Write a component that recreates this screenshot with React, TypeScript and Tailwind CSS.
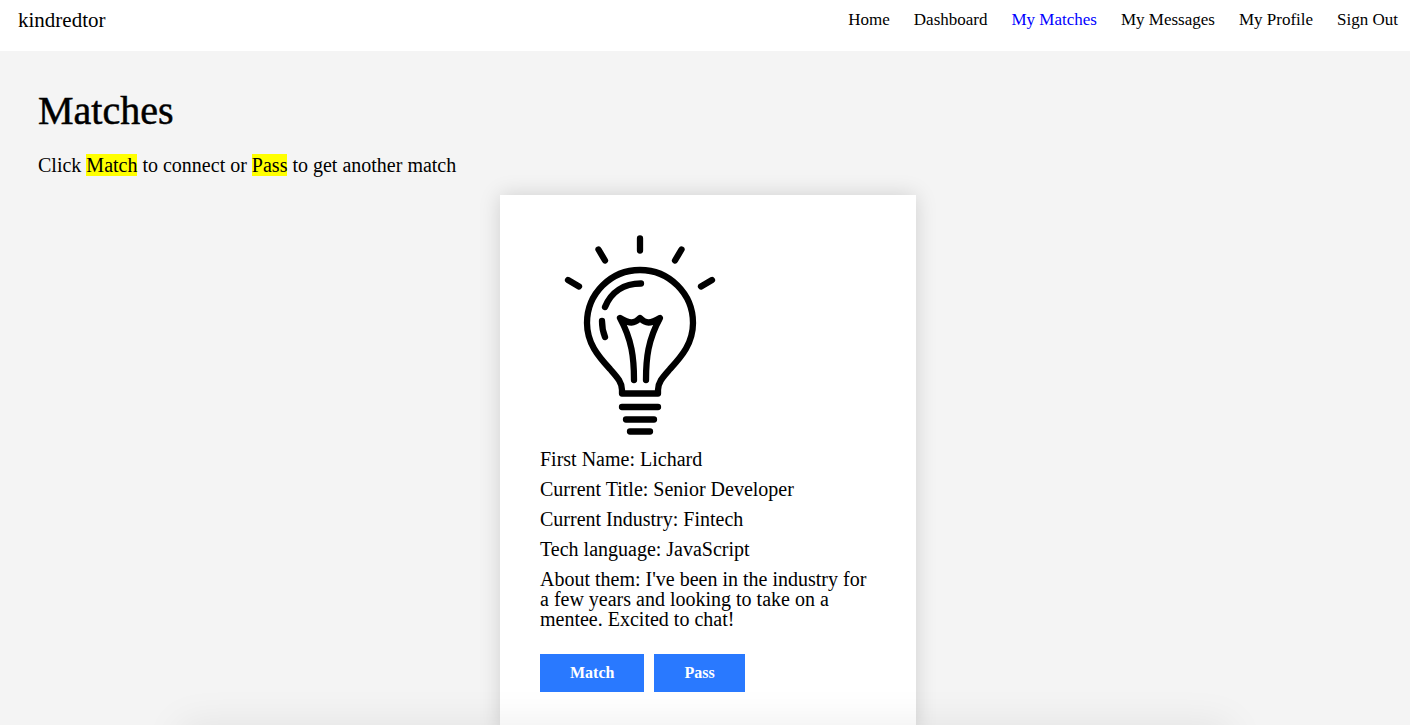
const links = ["Home", "Dashboard", "My Matches", "My Messages", "My Profile", "Sign Out"];

const details = [
  "First Name: Lichard",
  "Current Title: Senior Developer",
  "Current Industry: Fintech",
  "Tech language: JavaScript",
  "About them: I've been in the industry for a few years and looking to take on a mentee. Excited to chat!",
];

function Bulb() {
  return (
    <svg
      viewBox="0 0 200 200"
      className="block size-[200px]"
      fill="none"
      stroke="#000"
      strokeWidth="6.3"
      strokeLinecap="round"
      strokeLinejoin="round"
      role="img"
      aria-label="Light bulb"
    >
      <path d="M100 3.5V15.500M58.500 14.500L65 25.500M141.500 14.500L135 25.500M28 45L39 51.500M172 45L161 51.500" />
      <path d="M82 158.500V155C82 147 77 142 70 134C58 121 47 108 47 88A53 53 0 0 1 153 88C153 108 142 121 130 134C123 142 118 147 118 155V158.500Z" />
      <path d="M65 72C71 57 84 48.500 101 48.500M62 86C62 92 63 97 65 102" />
      <path d="M94 145C94 123 92 105 80 83C90 89 94 89 100 83C106 89 110 89 120 83C108 105 106 123 106 145" />
      <path d="M82 172H118M86 184.500H114M90 196.500H110" />
    </svg>
  );
}

export default function App() {
  return (
    <div className="relative min-h-screen bg-[#f4f4f4] font-['Liberation_Serif',serif] text-[20px] leading-5 text-black">
      <header className="flex items-start justify-between bg-white pt-2.5 pr-3 pb-5 pl-[18px]">
        <a href="#home" className="text-[21px] leading-[21px]">kindredtor</a>
        <nav aria-label="Main" className="flex gap-6 text-[17px] leading-5">
          {links.map((label) => (
            <a key={label} href="#" className={label === "My Matches" ? "text-[#0000ff]" : ""}>
              {label}
            </a>
          ))}
        </nav>
      </header>
      <main className="pt-10 pr-8 pl-[38px]">
        <h1 className="text-[40px] leading-10 [-webkit-text-stroke:0.5px_black]">Matches</h1>
        <p className="mt-6">
          Click <mark className="bg-[#ffff00]">Match</mark> to connect or{" "}
          <mark className="bg-[#ffff00]">Pass</mark> to get another match
        </p>
        <section className="mx-auto mt-5 w-full max-w-[416px] bg-white p-10 shadow-[0_0_20px_rgba(0,0,0,0.15)]">
          <Bulb />
          <div className="mt-3.5 flex flex-col gap-2.5">
            {details.map((text) => (
              <p key={text}>{text}</p>
            ))}
          </div>
          <div className="mt-[25px] flex gap-2.5 text-base leading-[18px] font-bold text-white">
            <button type="button" className="bg-[#2979ff] px-[30px] py-2.5">Match</button>
            <button type="button" className="bg-[#2979ff] px-[30px] py-2.5">Pass</button>
          </div>
        </section>
      </main>
      <div
        aria-hidden="true"
        className="pointer-events-none fixed inset-x-[180px] top-full h-10 shadow-[0_0_40px_rgba(0,0,0,0.08)]"
      />
    </div>
  );
}
